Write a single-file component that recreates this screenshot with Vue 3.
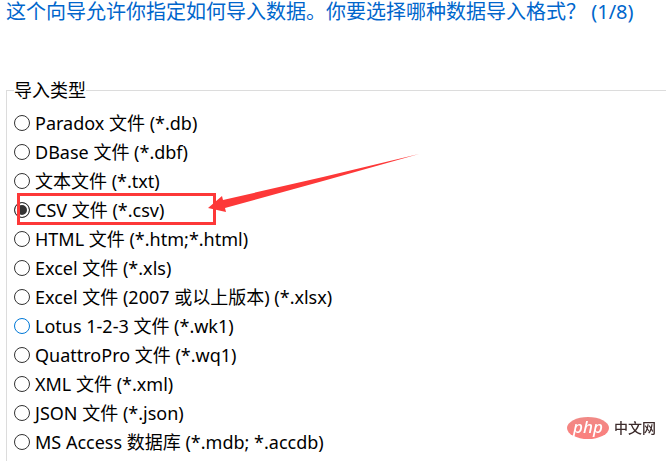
<template>
    <main class="wizard">
        <h1 class="wizard-title">这个向导允许你指定如何导入数据。你要选择哪种数据导入格式？ (1/8)</h1>

        <fieldset class="import-group">
            <legend>导入类型</legend>
            <div v-for="type in importTypes" :key="type.id" class="import-row">
                <input
                    :id="type.id"
                    v-model="selected"
                    type="radio"
                    name="import-type"
                    :value="type.id"
                    :class="{ focused: type.id === focusedType }"
                />
                <label :for="type.id">{{ type.label }}</label>
                <template v-if="type.id === 'csv'">
                    <div class="marker"></div>
                    <svg class="arrow" viewBox="0 0 212 60" aria-hidden="true">
                        <path d="M0 54 L14 42 L15 46 L115 23 L211 0 L115 27 L17 54 L18 58 Z" fill="#fd3838" />
                    </svg>
                </template>
            </div>
        </fieldset>

        <div class="brand">
            <span class="brand-badge">php</span>
            <span class="brand-name">中文网</span>
        </div>
    </main>
</template>

<script setup>
import { ref } from 'vue';

const importTypes = [
    { id: 'db', label: 'Paradox 文件 (*.db)' },
    { id: 'dbf', label: 'DBase 文件 (*.dbf)' },
    { id: 'txt', label: '文本文件 (*.txt)' },
    { id: 'csv', label: 'CSV 文件 (*.csv)' },
    { id: 'html', label: 'HTML 文件 (*.htm;*.html)' },
    { id: 'xls', label: 'Excel 文件 (*.xls)' },
    { id: 'xlsx', label: 'Excel 文件 (2007 或以上版本) (*.xlsx)' },
    { id: 'wk1', label: 'Lotus 1-2-3 文件 (*.wk1)' },
    { id: 'wq1', label: 'QuattroPro 文件 (*.wq1)' },
    { id: 'xml', label: 'XML 文件 (*.xml)' },
    { id: 'json', label: 'JSON 文件 (*.json)' },
    { id: 'access', label: 'MS Access 数据库 (*.mdb; *.accdb)' }
];

const selected = ref('csv');
const focusedType = 'wk1';
</script>

<style>
body {
    margin: 0;
    background: #fff;
}
</style>

<style scoped>
.wizard {
    box-sizing: border-box;
    display: flex;
    flex-direction: column;
    min-height: 100vh;
    padding-left: 6px;
    color: #000;
    font-family: "Noto Sans", "Noto Sans CJK SC", sans-serif;
    font-size: 18px;
}

.wizard-title {
    margin: 0 0 56px;
    color: #0066cc;
    font-size: 20px;
    font-weight: 400;
    line-height: 24px;
    white-space: nowrap;
}

.import-group {
    flex: 1;
    min-width: 0;
    margin: 0;
    padding: 8px 0 0 7px;
    border: 1px solid #dcdcdc;
    border-right: none;
    border-bottom: none;
}

.import-group legend {
    padding: 0;
    line-height: 20px;
}

.import-row {
    position: relative;
    display: flex;
    align-items: center;
    gap: 5px;
    height: 29px;
    white-space: nowrap;
}

.import-row label {
    line-height: 26px;
}

.import-row input {
    appearance: none;
    box-sizing: border-box;
    flex: none;
    width: 16px;
    height: 16px;
    margin: 0;
    border: 1px solid #333;
    border-radius: 50%;
    background: #fff;
}

.import-row input:checked {
    background: #333;
    box-shadow: inset 0 0 0 2px #fff;
}

.import-row input.focused {
    border-color: #0078d7;
}

.marker {
    position: absolute;
    top: -2px;
    left: 3px;
    box-sizing: border-box;
    width: 199px;
    height: 32px;
    border: 3px solid #fd3838;
    pointer-events: none;
}

.arrow {
    position: absolute;
    top: -41px;
    left: 194px;
    width: 212px;
    height: 60px;
    pointer-events: none;
}

.brand {
    position: fixed;
    right: 10px;
    bottom: 22px;
    display: flex;
    align-items: center;
    gap: 5px;
}

.brand-badge {
    width: 42px;
    height: 22px;
    border-radius: 50%;
    background: linear-gradient(#f08a86, #fb7f7d);
    color: #fff;
    font-size: 17px;
    font-style: italic;
    font-weight: 500;
    line-height: 20px;
    text-align: center;
}

.brand-name {
    color: #3c2b2b;
    font-size: 14px;
    font-weight: 500;
    line-height: 22px;
}
</style>
